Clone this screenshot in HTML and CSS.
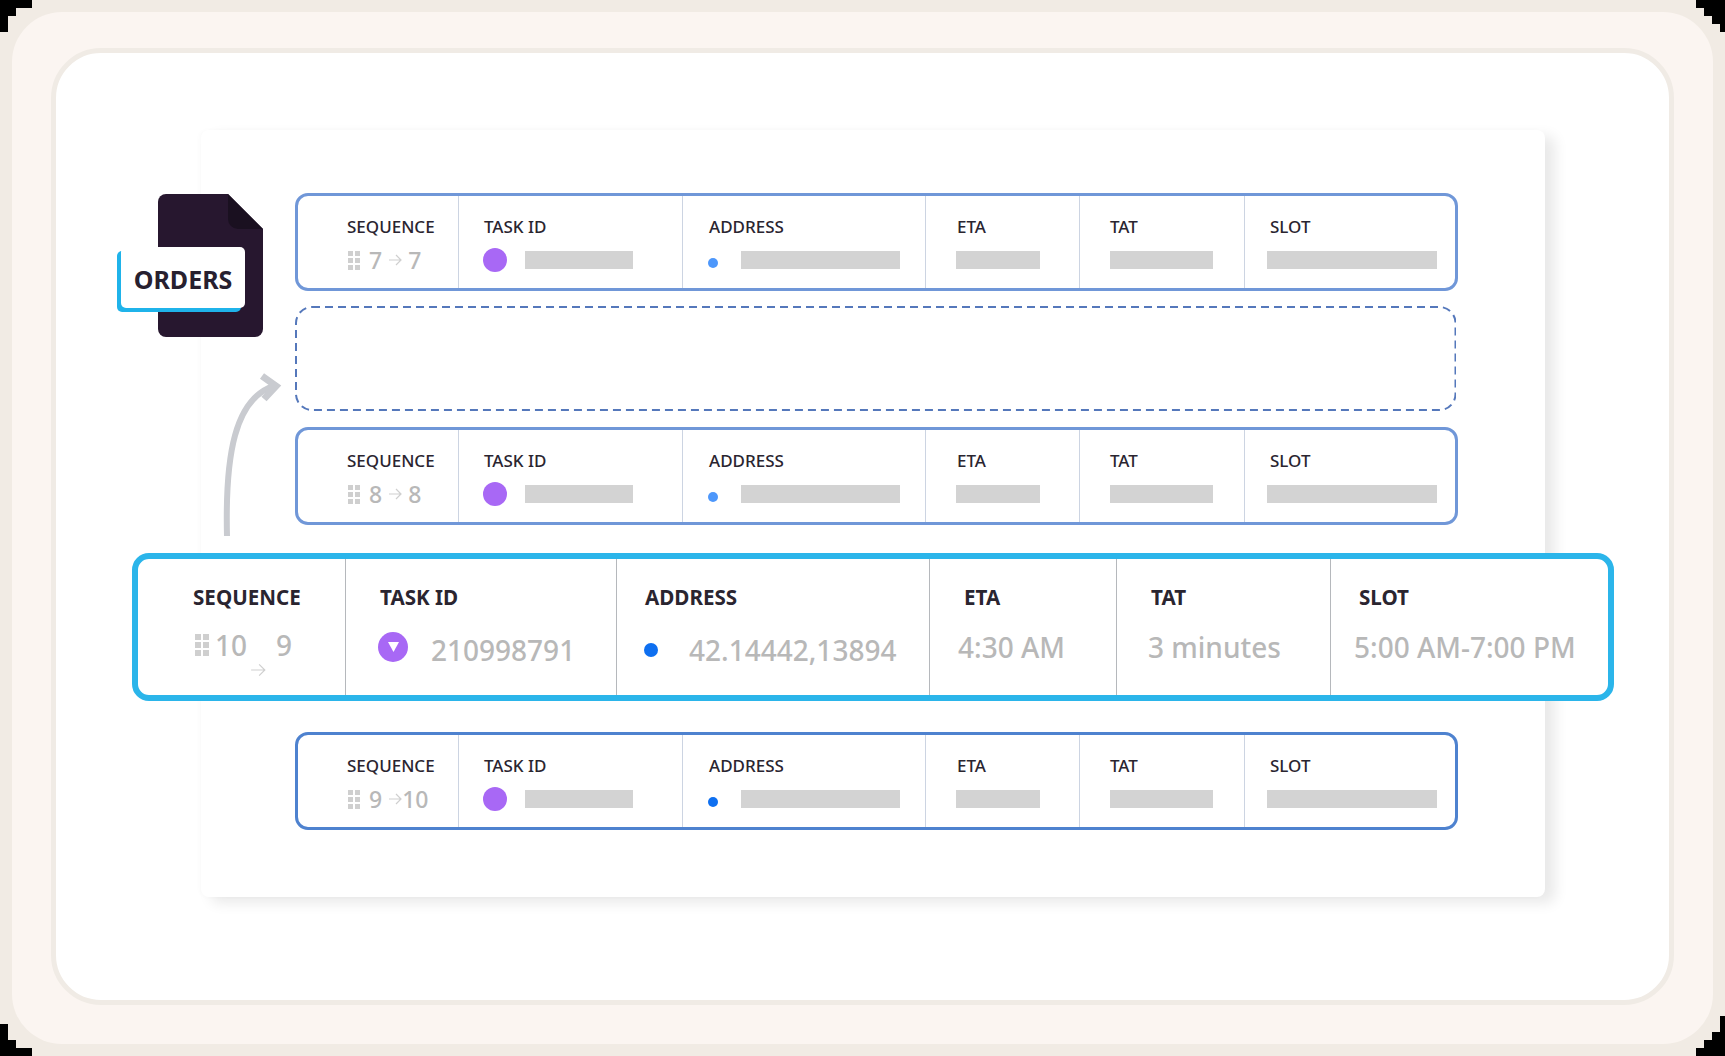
FILE: index.html
```html
<!DOCTYPE html>
<html lang="en">
<head>
  <meta charset="UTF-8" />
  <title>Orders</title>
  <link rel="stylesheet" href="styles.css">
</head>
<body>
<div class="ring">
  <div class="frame">
    <div class="panel">
      <div class="card">

        <div class="file">
          <svg class="file-sheet" width="105" height="143" viewBox="0 0 105 143">
            <path d="M8 0H70L105 35V135a8 8 0 0 1-8 8H8a8 8 0 0 1-8-8V8a8 8 0 0 1 8-8z" fill="#27172f"/>
            <path d="M70 0L105 35H80a10 10 0 0 1-10-10z" fill="#1a1020"/>
          </svg>
          <div class="file-label">ORDERS</div>
        </div>

        <svg class="move-arrow" width="70" height="172" viewBox="0 0 70 172">
          <path d="M12 166C10 84 20 30 58 16" fill="none" stroke="#c9cbd0" stroke-width="6"/>
          <path d="M47 6L61 16L49 29" fill="none" stroke="#c9cbd0" stroke-width="7"/>
        </svg>

        <div class="row faded">
          <div class="cell seq">
            <div class="head">SEQUENCE</div>
            <div class="val">
              <span class="grip"><i></i><i></i><i></i><i></i><i></i><i></i></span>
              <span>7</span>
              <svg class="arr" viewBox="0 0 14 14"><path d="M1 7H13M8 2L13 7L8 12" fill="none" stroke="#cfcfcf" stroke-width="1.2"/></svg>
              <span>7</span>
            </div>
          </div>
          <div class="cell task">
            <div class="head">TASK ID</div>
            <div class="val"><span class="purple"></span><span class="bar bar-task"></span></div>
          </div>
          <div class="cell addr">
            <div class="head">ADDRESS</div>
            <div class="val"><span class="blue"></span><span class="bar bar-addr"></span></div>
          </div>
          <div class="cell eta">
            <div class="head">ETA</div>
            <div class="val"><span class="bar bar-eta"></span></div>
          </div>
          <div class="cell tat">
            <div class="head">TAT</div>
            <div class="val"><span class="bar bar-tat"></span></div>
          </div>
          <div class="cell slot">
            <div class="head">SLOT</div>
            <div class="val"><span class="bar bar-slot"></span></div>
          </div>
        </div>

        <div class="drop">
          <svg width="1161" height="105" viewBox="0 0 1161 105">
            <rect x="1" y="1" width="1159.5" height="103" rx="16" fill="none" stroke="#5578bb" stroke-width="2" stroke-dasharray="8 5"/>
          </svg>
        </div>

        <div class="row faded second">
          <div class="cell seq">
            <div class="head">SEQUENCE</div>
            <div class="val">
              <span class="grip"><i></i><i></i><i></i><i></i><i></i><i></i></span>
              <span>8</span>
              <svg class="arr" viewBox="0 0 14 14"><path d="M1 7H13M8 2L13 7L8 12" fill="none" stroke="#cfcfcf" stroke-width="1.2"/></svg>
              <span>8</span>
            </div>
          </div>
          <div class="cell task">
            <div class="head">TASK ID</div>
            <div class="val"><span class="purple"></span><span class="bar bar-task"></span></div>
          </div>
          <div class="cell addr">
            <div class="head">ADDRESS</div>
            <div class="val"><span class="blue"></span><span class="bar bar-addr"></span></div>
          </div>
          <div class="cell eta">
            <div class="head">ETA</div>
            <div class="val"><span class="bar bar-eta"></span></div>
          </div>
          <div class="cell tat">
            <div class="head">TAT</div>
            <div class="val"><span class="bar bar-tat"></span></div>
          </div>
          <div class="cell slot">
            <div class="head">SLOT</div>
            <div class="val"><span class="bar bar-slot"></span></div>
          </div>
        </div>

        <div class="big">
          <div class="cell seq">
            <div class="head">SEQUENCE</div>
            <div class="val">
              <span class="grip"><i></i><i></i><i></i><i></i><i></i><i></i></span>
              <span>10</span>
              <svg class="arr" viewBox="0 0 14 14"><path d="M1 7H13M8 2L13 7L8 12" fill="none" stroke="#cfcfcf" stroke-width="1"/></svg>
              <span>9</span>
            </div>
          </div>
          <div class="cell task">
            <div class="head">TASK ID</div>
            <div class="val">
              <span class="purple"><svg width="11" height="10" viewBox="0 0 11 10"><path d="M0 0H11L5.5 10z" fill="#fff"/></svg></span>
              <span class="num">210998791</span>
            </div>
          </div>
          <div class="cell addr">
            <div class="head">ADDRESS</div>
            <div class="val"><span class="blue"></span><span class="num">42.14442,13894</span></div>
          </div>
          <div class="cell eta">
            <div class="head">ETA</div>
            <div class="val">4:30 AM</div>
          </div>
          <div class="cell tat">
            <div class="head">TAT</div>
            <div class="val">3 minutes</div>
          </div>
          <div class="cell slot">
            <div class="head">SLOT</div>
            <div class="val">5:00 AM-7:00 PM</div>
          </div>
        </div>

        <div class="row last">
          <div class="cell seq">
            <div class="head">SEQUENCE</div>
            <div class="val">
              <span class="grip"><i></i><i></i><i></i><i></i><i></i><i></i></span>
              <span>9</span>
              <svg class="arr" viewBox="0 0 14 14"><path d="M1 7H13M8 2L13 7L8 12" fill="none" stroke="#cfcfcf" stroke-width="1.2"/></svg>
              <span class="tight">10</span>
            </div>
          </div>
          <div class="cell task">
            <div class="head">TASK ID</div>
            <div class="val"><span class="purple"></span><span class="bar bar-task"></span></div>
          </div>
          <div class="cell addr">
            <div class="head">ADDRESS</div>
            <div class="val"><span class="blue"></span><span class="bar bar-addr"></span></div>
          </div>
          <div class="cell eta">
            <div class="head">ETA</div>
            <div class="val"><span class="bar bar-eta"></span></div>
          </div>
          <div class="cell tat">
            <div class="head">TAT</div>
            <div class="val"><span class="bar bar-tat"></span></div>
          </div>
          <div class="cell slot">
            <div class="head">SLOT</div>
            <div class="val"><span class="bar bar-slot"></span></div>
          </div>
        </div>

      </div>
    </div>
  </div>
</div>
</body>
</html>
```

FILE: styles.css
```css
* {
  box-sizing: border-box;
}
body {
  margin: 0;
  background: #000;
  font-family: "Noto Sans", "Open Sans", sans-serif;
  color: #2a2530;
  overflow: hidden;
}
/* stepped black corners come from the clip */
.ring {
  width: 1725px;
  height: 1056px;
  padding: 12px;
  background: #f1ebe4;
  clip-path: polygon(
    32px 0, 1696px 0, 1696px 8px, 1704px 8px, 1704px 16px, 1712px 16px, 1712px 24px, 1720px 24px, 1720px 32px, 1725px 32px,
    1725px 1016px, 1720px 1016px, 1720px 1032px, 1712px 1032px, 1712px 1040px, 1704px 1040px, 1704px 1048px, 1696px 1048px, 1696px 1056px,
    32px 1056px, 32px 1048px, 16px 1048px, 16px 1040px, 8px 1040px, 8px 1024px, 0 1024px,
    0 32px, 8px 32px, 8px 16px, 16px 16px, 16px 8px, 32px 8px
  );
}
.frame {
  height: 100%;
  padding: 36px 39px 39px 39px;
  background: #fbf5f1;
  border-radius: 50px;
}
.panel {
  height: 100%;
  padding: 77px 124px 103px 145px;
  background: #fff;
  border: 5px solid #f0ebe5;
  border-radius: 50px;
}
.card {
  position: relative;
  display: flex;
  flex-direction: column;
  height: 100%;
  padding: 63px 87px 0 94px;
  background: #fff;
  border-radius: 8px;
  box-shadow: 10px 6px 14px rgba(0, 0, 0, 0.09), -2px 0 4px rgba(0, 0, 0, 0.02);
}

.file {
  position: absolute;
  left: -84px;
  top: 64px;
  width: 130px;
  height: 143px;
}
.file-sheet {
  position: absolute;
  left: 41px;
  top: 0;
}
.file-label {
  position: absolute;
  left: 4px;
  top: 53px;
  width: 124px;
  height: 61px;
  background: #fff;
  border-radius: 5px;
  box-shadow: -4px 4px 0 #1fb3ea;
  text-align: center;
  line-height: 64px;
  font-size: 25px;
  font-weight: 700;
  color: #27202f;
}
.move-arrow {
  position: absolute;
  left: 14px;
  top: 240px;
}

.row {
  display: grid;
  grid-template-columns: 160px 224px 243px 154px 165px 1fr;
  height: 98px;
  background: #fff;
  border: 3px solid #4e82cf;
  border-radius: 13px;
  flex: none;
}
.faded {
  border-color: #7097d8;
}
.second {
  margin-top: 16px;
}
.last {
  margin-top: 31px;
}
.drop {
  height: 105px;
  margin-top: 15px;
  flex: none;
}
.drop svg {
  display: block;
}
.cell {
  padding-top: 20px;
  border-left: 1px solid #ccd4e2;
}
.cell:first-child {
  border-left: none;
}
.head {
  font-size: 17px;
  font-weight: 500;
  line-height: 22px;
  white-space: nowrap;
}
.val {
  display: flex;
  align-items: center;
  height: 24px;
  margin-top: 10px;
  font-size: 23px;
  font-weight: 500;
  color: #b8b8b8;
  white-space: nowrap;
}
.bar {
  display: block;
  height: 18px;
  background: #d3d3d3;
}
.grip {
  display: grid;
  grid-template-columns: 5px 5px;
  gap: 2px;
  flex: none;
  margin-right: 9px;
}
.grip i {
  height: 5px;
  background: #cfcfcf;
}
.arr {
  width: 14px;
  height: 14px;
  margin: 0 6px;
  flex: none;
}
.tight {
  margin-left: -6px;
}
.purple {
  display: flex;
  align-items: center;
  justify-content: center;
  flex: none;
  width: 24px;
  height: 24px;
  margin-left: -1px;
  border-radius: 50%;
  background: #a868f5;
}
.blue {
  flex: none;
  width: 10px;
  height: 10px;
  margin-top: 5px;
  margin-left: -1px;
  border-radius: 50%;
  background: #0e6ff0;
}
.faded .blue {
  background: #4d97fb;
}

.seq {
  padding-left: 49px;
}
.task {
  padding-left: 25px;
}
.addr {
  padding-left: 26px;
}
.eta {
  padding-left: 31px;
}
.tat {
  padding-left: 30px;
}
.slot {
  padding-left: 25px;
}
.seq .val {
  padding-left: 1px;
}
.bar-task {
  width: 108px;
  margin-left: 18px;
}
.bar-addr {
  width: 159px;
  margin-left: 23px;
}
.bar-eta {
  width: 84px;
  margin-left: -1px;
}
.bar-tat {
  width: 103px;
}
.bar-slot {
  width: 170px;
  margin-left: -3px;
}

/* the row being dragged */
.big {
  display: grid;
  grid-template-columns: 207px 271px 313px 187px 214px 1fr;
  flex: none;
  height: 148px;
  margin: 28px -156px 0 -163px;
  background: #fff;
  border: 6px solid #2bb5ea;
  border-radius: 17px;
  position: relative;
}
.big .cell {
  padding-top: 25px;
  border-left-color: #b5b8bc;
}
.big .head {
  font-size: 20.6px;
  font-weight: 700;
  line-height: 26px;
}
.big .val {
  height: 36px;
  margin-top: 19px;
  font-size: 28px;
  font-weight: 500;
}
.big .grip {
  grid-template-columns: 6px 6px;
  margin-right: 6px;
}
.big .grip i {
  height: 6px;
}
.big .arr {
  width: 16px;
  height: 16px;
  margin: 0 10px 0 3px;
  align-self: flex-end;
  transform: translateY(15px);
}
.big .seq {
  padding-left: 55px;
}
.big .seq .val {
  padding-left: 2px;
  margin-top: 17px;
}
.big .task {
  padding-left: 34px;
}
.big .task .val {
  margin-left: -1px;
}
.big .purple {
  width: 30px;
  height: 30px;
}
.big .num {
  margin-left: 23px;
  margin-top: 5px;
}
.big .addr {
  padding-left: 28px;
}
.big .blue {
  width: 14px;
  height: 14px;
  margin-top: 6px;
}
.big .addr .num {
  margin-left: 31px;
}
.big .eta {
  padding-left: 34px;
}
.big .eta .val {
  margin-left: -6px;
}
.big .tat {
  padding-left: 34px;
}
.big .tat .val {
  margin-left: -3px;
}
.big .slot {
  padding-left: 28px;
}
.big .slot .val {
  margin-left: -5px;
}
```
